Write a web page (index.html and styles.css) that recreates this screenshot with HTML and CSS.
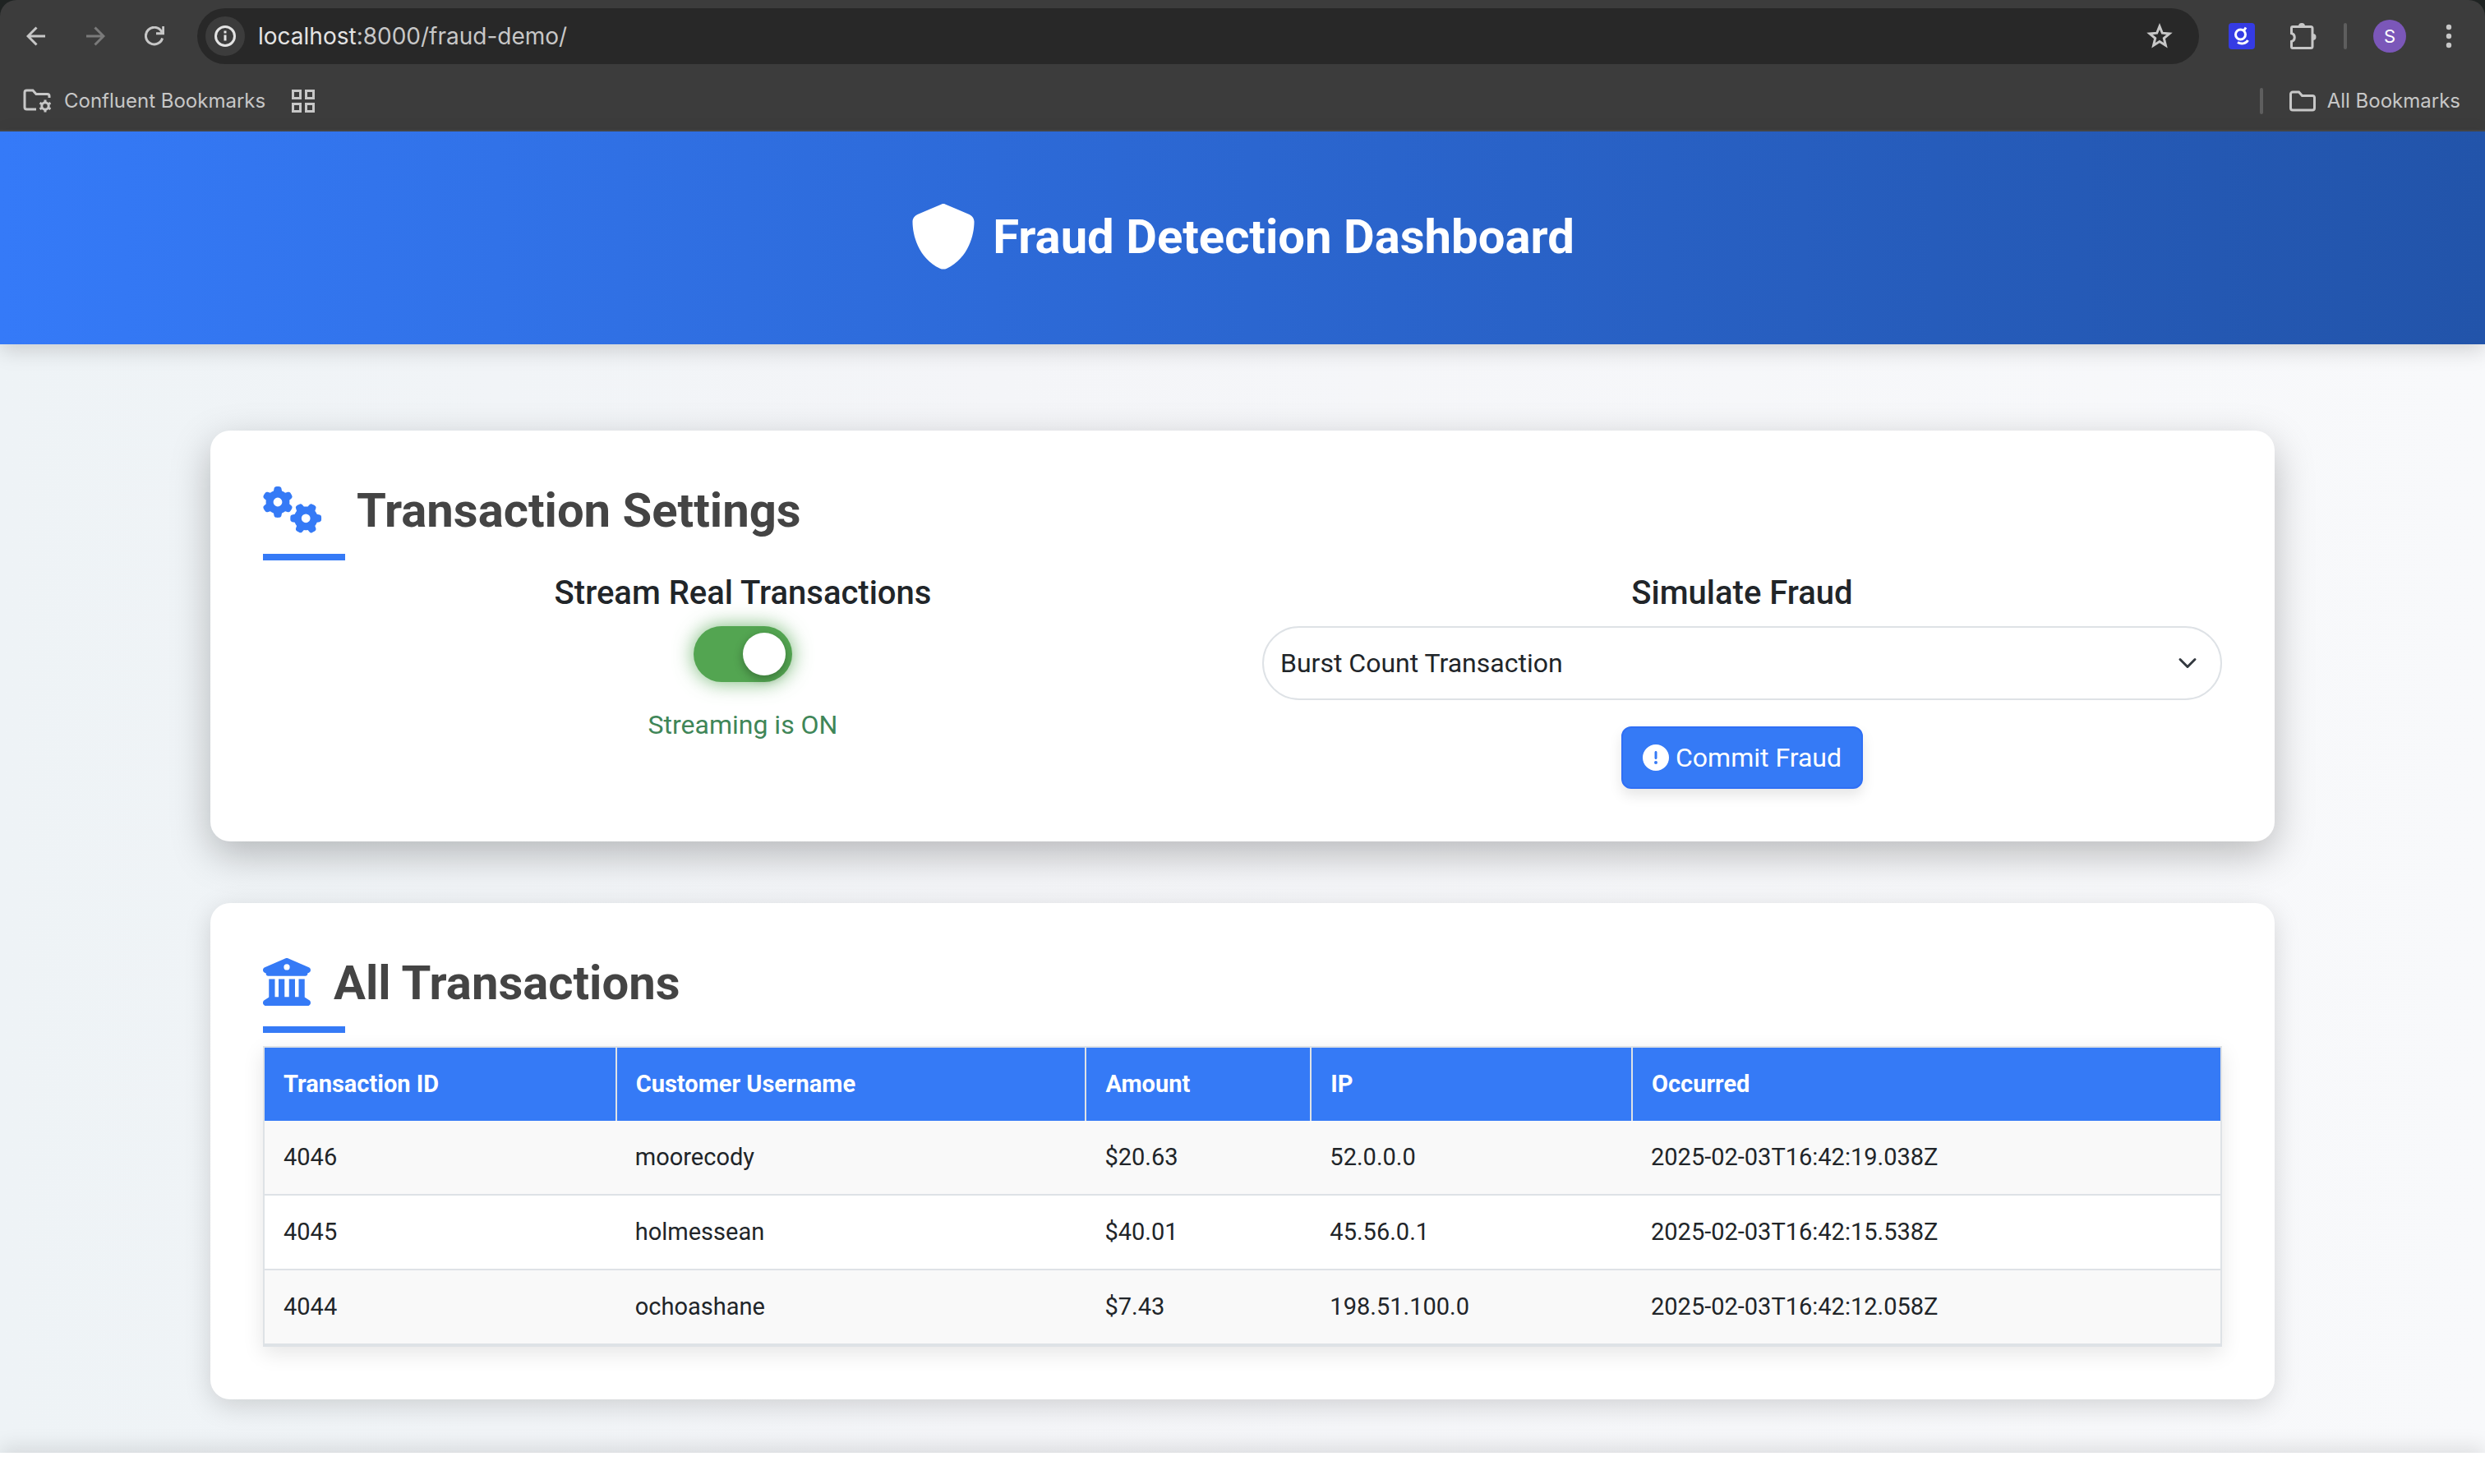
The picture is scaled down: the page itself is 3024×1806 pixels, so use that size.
FILE: index.html
```html
<!DOCTYPE html>
<html lang="en">
<head>
<meta charset="utf-8">
<meta name="viewport" content="width=device-width, initial-scale=1">
<title>Fraud Detection Dashboard</title>
<link rel="stylesheet" href="styles.css">
</head>
<body>
<div class="browser">
  <div class="toolbar">
    <button class="tool" aria-label="Back"><svg width="24" height="24" viewBox="0 0 24 24"><path d="M23 12H3M12.500 1.500 2 12l10.500 10.500" /></svg></button>
    <button class="tool tool-disabled" aria-label="Forward" disabled><svg width="24" height="24" viewBox="0 0 24 24"><path d="M1 12h20M11.500 1.500 22 12 11.500 22.500" /></svg></button>
    <button class="tool" aria-label="Reload"><svg width="24" height="24" viewBox="0 0 24 24"><path d="M21.600 14.500A10.300 10.300 0 1 1 20.500 6.200L22.500 8.500M22.700 0v8.700H14" /></svg></button>
    <div class="omnibox">
      <button class="site-info" aria-label="Site information"><svg width="26" height="26" viewBox="0 0 26 26"><circle cx="13" cy="13" r="11.500" /><path d="M13 11.500v7M13 6.500v3" /></svg></button>
      <div class="url"><span class="host">localhost</span>:8000/fraud-demo/</div>
      <button class="star" aria-label="Bookmark this tab"><svg width="32" height="32" viewBox="0 0 32 32"><path d="M16 4l3.300 8.200 8.700.7-6.700 5.700 2.100 8.600L16 22.600l-7.400 4.600 2.100-8.600L4 12.900l8.700-.7z" /></svg></button>
    </div>
    <div class="extensions">
      <button class="ext-g" aria-label="Extension"><svg width="32" height="32" viewBox="0 0 32 32"><circle cx="14.500" cy="14" r="6" /><path d="M18.500 9.500l2.500-4M11 23.500c4 2.500 10 2 12.500-2.500" /></svg></button>
      <button class="ext-all" aria-label="Extensions"><svg width="34" height="34" viewBox="0 0 34 34"><path d="M4 5.500h22a2 2 0 0 1 2 2v22a2 2 0 0 1-2 2H4a1.500 1.500 0 0 1-1.500-1.500v-6.500a5.200 5.200 0 0 0 0-10V7A1.500 1.500 0 0 1 4 5.500z" /><path class="solid" d="M11 5a4 4 0 0 1 8 0zM28.500 14a4 4 0 0 1 0 8z" /></svg></button>
      <span class="divider"></span>
      <button class="avatar" aria-label="Profile">S</button>
      <button class="menu" aria-label="Menu"><svg width="8" height="30" viewBox="0 0 8 30"><circle cx="4" cy="4" r="3.200" /><circle cx="4" cy="15" r="3.200" /><circle cx="4" cy="26" r="3.200" /></svg></button>
    </div>
  </div>
  <div class="bookmarks">
    <a class="bookmark" href="#"><svg width="36" height="30" viewBox="0 0 36 30"><path d="M16 25H4.500A2.500 2.500 0 0 1 2 22.500v-18A2.500 2.500 0 0 1 4.500 2H12l4 4.500h13.500A2.500 2.500 0 0 1 32 9v2" /><circle cx="27" cy="21" r="4.200" /><path d="M27 13.500v3M27 25.500v3M20.500 17.200l2.700 1.600M30.800 23.200l2.700 1.600M33.500 17.200l-2.700 1.600M23.200 23.200l-2.700 1.600" /></svg><span>Confluent Bookmarks</span></a>
    <a class="bookmark" href="#" aria-label="Apps"><svg width="28" height="28" viewBox="0 0 28 28"><path d="M1.500 1.500h9v9h-9zM17.500 1.500h9v9h-9zM1.500 17.500h9v9h-9zM17.500 17.500h9v9h-9z" /></svg></a>
    <span class="divider divider-end"></span>
    <a class="bookmark" href="#"><svg width="32" height="26" viewBox="0 0 32 26"><path d="M4 2h7.500l4 4.500H28A2.500 2.500 0 0 1 30.500 8.500v13A2.500 2.500 0 0 1 28 24H4a2.500 2.500 0 0 1-2.500-2.500v-17A2.500 2.500 0 0 1 4 2z" /></svg><span>All Bookmarks</span></a>
  </div>
</div>

<header class="hero">
  <svg width="80" height="80" viewBox="0 0 512 512" aria-hidden="true"><path d="M256 0c4.600 0 9.200 1 13.400 2.900L457.700 82.800c22 9.300 38.400 31 38.300 57.200c-.5 99.200-41.300 280.700-213.600 363.200c-16.700 8-36.100 8-52.800 0C57.300 420.700 16.500 239.200 16 140c-.1-26.200 16.300-47.900 38.300-57.200L242.700 2.900C246.800 1 251.400 0 256 0z" /></svg>
  <h1>Fraud Detection Dashboard</h1>
</header>

<main class="content">
  <section class="card card-raised">
    <h2 class="title"><span class="title-row"><svg width="72" height="58" viewBox="0 0 640 512" aria-hidden="true"><path fill-rule="evenodd" d="M308.500 135.300c7.100-6.300 9.900-16.200 6.200-25c-2.300-5.300-4.800-10.500-7.600-15.500L304 89.400c-3-5-6.300-9.900-9.800-14.600c-5.700-7.600-15.700-10.100-24.700-7.100l-28.200 9.300c-10.700-8.800-23-16-36.200-20.900L199 27.100c-1.900-9.300-9.100-16.700-18.500-17.800C173.900 8.400 167.200 8 160.400 8h-.7c-6.800 0-13.500.4-20.100 1.200c-9.400 1.100-16.600 8.600-18.500 17.800L115 56.100c-13.300 5-25.500 12.100-36.200 20.900L50.500 67.800c-9-3-19-.5-24.700 7.100c-3.500 4.700-6.800 9.600-9.900 14.600l-3 5.300c-2.800 5-5.300 10.200-7.600 15.600c-3.700 8.700-.9 18.600 6.200 25l22.200 19.800C32.600 161.900 32 168.900 32 176s.6 14.100 1.700 20.900L11.500 216.700c-7.100 6.300-9.900 16.200-6.200 25c2.300 5.300 4.800 10.500 7.600 15.600l3 5.200c3 5.100 6.300 9.900 9.900 14.600c5.700 7.600 15.700 10.100 24.700 7.100l28.200-9.300c10.700 8.800 23 16 36.200 20.900l6.100 29.100c1.900 9.300 9.100 16.700 18.500 17.800c6.700.8 13.500 1.200 20.400 1.200s13.700-.4 20.400-1.200c9.400-1.100 16.600-8.600 18.500-17.800l6.100-29.100c13.300-5 25.500-12.100 36.200-20.900l28.200 9.300c9 3 19 .5 24.700-7.100c3.500-4.700 6.800-9.500 9.800-14.600l3.100-5.400c2.800-5 5.300-10.200 7.600-15.500c3.700-8.700.9-18.600-6.200-25l-22.200-19.800c1.100-6.800 1.700-13.800 1.700-20.900s-.6-14.100-1.700-20.900l22.200-19.800zM112 176a48 48 0 1 1 96 0a48 48 0 1 1-96 0zM504.700 500.500c6.300 7.100 16.200 9.900 25 6.200c5.300-2.300 10.500-4.800 15.500-7.600l5.400-3.100c5-3 9.900-6.300 14.600-9.800c7.600-5.700 10.100-15.700 7.100-24.700l-9.300-28.200c8.800-10.700 16-23 20.900-36.200l29.100-6.100c9.300-1.900 16.700-9.100 17.800-18.500c.8-6.700 1.200-13.500 1.200-20.400s-.4-13.700-1.200-20.400c-1.100-9.400-8.600-16.600-17.800-18.500L583.900 307c-5-13.300-12.100-25.500-20.900-36.200l9.300-28.200c3-9 .5-19-7.100-24.700c-4.700-3.500-9.600-6.800-14.600-9.900l-5.300-3c-5-2.800-10.200-5.300-15.600-7.600c-8.700-3.700-18.600-.9-25 6.200l-19.800 22.200c-6.800-1.100-13.800-1.700-20.900-1.700s-14.100.6-20.900 1.700l-19.800-22.200c-6.300-7.100-16.200-9.900-25-6.200c-5.300 2.300-10.500 4.800-15.600 7.600l-5.200 3c-5.100 3-9.900 6.300-14.600 9.900c-7.600 5.700-10.100 15.700-7.100 24.700l9.300 28.200c-8.800 10.700-16 23-20.900 36.200L315.100 313c-9.300 1.900-16.700 9.100-17.800 18.500c-.8 6.700-1.200 13.500-1.200 20.400s.4 13.700 1.200 20.400c1.100 9.400 8.600 16.600 17.800 18.500l29.100 6.100c5 13.300 12.100 25.500 20.900 36.200l-9.300 28.200c-3 9-.5 19 7.100 24.700c4.700 3.500 9.500 6.800 14.600 9.800l5.400 3.100c5 2.800 10.200 5.300 15.500 7.600c8.700 3.700 18.600.9 25-6.200l19.800-22.200c6.800 1.100 13.800 1.700 20.900 1.700s14.100-.6 20.900-1.700l19.800 22.200zM464 304a48 48 0 1 1 0 96a48 48 0 1 1 0-96z" /></svg><span class="title-text title-text-wide">Transaction Settings</span></span></h2>
    <div class="settings">
      <div class="setting">
        <h3><label for="stream">Stream Real Transactions</label></h3>
        <input class="switch" id="stream" type="checkbox" role="switch" checked>
        <p class="status">Streaming is ON</p>
      </div>
      <div class="setting">
        <h3><label for="fraud">Simulate Fraud</label></h3>
        <div class="select-wrap">
          <select class="select" id="fraud"><option>Burst Count Transaction</option></select>
          <svg class="chevron" width="24" height="24" viewBox="0 0 16 16" aria-hidden="true"><path d="m2 5 6 6 6-6" /></svg>
        </div>
        <button class="commit"><svg width="32" height="32" viewBox="0 0 512 512" aria-hidden="true"><path fill-rule="evenodd" d="M256 512A256 256 0 1 0 256 0a256 256 0 1 0 0 512zm0-384c13.300 0 24 10.700 24 24V264c0 13.300-10.700 24-24 24s-24-10.700-24-24V152c0-13.300 10.700-24 24-24zM224 352a32 32 0 1 1 64 0a32 32 0 1 1-64 0z" /></svg>Commit Fraud</button>
      </div>
    </div>
  </section>

  <section class="card">
    <h2 class="title"><span class="title-row"><svg width="58" height="58" viewBox="0 0 512 512" aria-hidden="true"><path fill-rule="evenodd" d="M243.400 2.600l-224 96c-14 6-21.800 21-18.700 35.800S16.800 160 32 160v8c0 13.300 10.700 24 24 24H456c13.300 0 24-10.700 24-24v-8c15.200 0 28.300-10.700 31.300-25.600s-4.800-29.900-18.700-35.800l-224-96c-8-3.400-17.200-3.400-25.200 0zM128 224H64V420.300c-.6 .3-1.200 .7-1.800 1.100l-48 32c-11.700 7.800-17 22.400-12.900 35.900S17.900 512 32 512H480c14.100 0 26.500-9.200 30.600-22.700s-1.100-28.100-12.900-35.900l-48-32c-.6-.4-1.200-.7-1.800-1.100V224H384V416H344V224H280V416H232V224H168V416H128V224zM256 64a32 32 0 1 1 0 64a32 32 0 1 1 0-64z" /></svg><span class="title-text">All Transactions</span></span></h2>
    <table class="transactions">
      <colgroup><col class="col-id"><col class="col-user"><col class="col-amount"><col class="col-ip"><col></colgroup>
      <thead><tr><th scope="col">Transaction ID</th><th scope="col">Customer Username</th><th scope="col">Amount</th><th scope="col">IP</th><th scope="col">Occurred</th></tr></thead>
      <tbody>
        <tr><td>4046</td><td>moorecody</td><td>$20.63</td><td>52.0.0.0</td><td>2025-02-03T16:42:19.038Z</td></tr>
        <tr><td>4045</td><td>holmessean</td><td>$40.01</td><td>45.56.0.1</td><td>2025-02-03T16:42:15.538Z</td></tr>
        <tr><td>4044</td><td>ochoashane</td><td>$7.43</td><td>198.51.100.0</td><td>2025-02-03T16:42:12.058Z</td></tr>
      </tbody>
    </table>
  </section>
</main>
<footer class="footer"></footer>
</body>
</html>
```
FILE: styles.css
```css
* { box-sizing: border-box; }

body {
  margin: 0;
  min-height: 100vh;
  display: flex;
  flex-direction: column;
  background: #1f2322;
  color: #212529;
  font: 32px/48px Roboto, sans-serif;
}

h1, h2, h3, p { margin: 0; }

button {
  border: 0;
  padding: 0;
  background: none;
  color: inherit;
  font: inherit;
  display: flex;
  align-items: center;
  justify-content: center;
}

svg { display: block; flex: none; }

/* Browser chrome */
.browser {
  background: #3c3c3c;
  border-bottom: 2px solid #474747;
  border-radius: 20px 20px 0 0;
  color: #c7c7c7;
  font: 24px/32px Inter, sans-serif;
}

.browser svg {
  fill: none;
  stroke: #c7c7c7;
  stroke-width: 3;
}

.toolbar {
  display: flex;
  align-items: center;
  height: 88px;
  padding: 0 40px 0 32px;
  gap: 48px;
}

.tool-disabled { opacity: .45; }

.omnibox {
  flex: 1;
  display: flex;
  align-items: center;
  height: 68px;
  margin-left: -8px;
  padding: 0 32px 0 10px;
  border-radius: 34px;
  background: #282828;
}

.site-info {
  width: 48px;
  height: 48px;
  border-radius: 50%;
  background: #3c3c3c;
}

.browser .site-info svg { stroke: #e3e3e3; }

.url {
  flex: 1;
  margin-left: 16px;
  font-size: 28px;
}

.host { color: #e3e3e3; }

.extensions {
  display: flex;
  align-items: center;
  gap: 32px;
  margin-left: -12px;
}

.ext-g {
  border-radius: 4px;
  background: #353be4;
}

.ext-all {
  width: 44px;
  justify-content: flex-end;
}

.browser .ext-g svg { stroke: #fff; }

.browser .solid { fill: #c7c7c7; stroke: none; }

.divider {
  width: 4px;
  height: 32px;
  border-radius: 2px;
  background: #5e5e5e;
}

.avatar {
  width: 40px;
  height: 40px;
  border-radius: 50%;
  background: #7b57b9;
  color: #fff;
  font-size: 22px;
}

.menu { margin-left: 16px; }

.browser .menu svg { fill: #c7c7c7; stroke: none; }

.bookmarks {
  display: flex;
  align-items: center;
  height: 70px;
  padding: 0 30px 0 28px;
  gap: 32px;
}

.bookmark {
  display: flex;
  align-items: center;
  gap: 14px;
  color: inherit;
  text-decoration: none;
}

.divider-end { margin-left: auto; }

/* Page header */
.hero {
  display: flex;
  justify-content: center;
  align-items: center;
  gap: 20px;
  padding: 88px 32px 91px;
  background: linear-gradient(90deg, #357af8, #2c68d4 45%, #2254aa);
  color: #fff;
  box-shadow: 0 8px 24px rgba(0, 0, 0, .15);
  z-index: 1;
}

.hero svg { fill: #fff; }

.hero h1 {
  font-size: 58px;
  line-height: 80px;
  font-weight: 700;
}

/* Cards */
.content {
  flex: 1;
  display: flex;
  flex-direction: column;
  align-items: center;
  gap: 75px;
  padding: 105px 32px 63px;
  background: linear-gradient(90deg, #eef3f6, #f4f5f8 40%, #f8f9fb);
}

.card {
  width: 100%;
  max-width: 2512px;
  padding: 64px;
  border-radius: 24px;
  background: #fff;
  box-shadow: 0 8px 32px rgba(0, 0, 0, .15);
}

.card-raised { box-shadow: 0 16px 48px rgba(0, 0, 0, .25); }

.title {
  display: grid;
  gap: 19px;
  margin-bottom: 16px;
  color: #444;
  font-size: 58px;
  line-height: 67px;
  font-weight: 700;
}

.title::after {
  content: "";
  width: 100px;
  height: 8px;
  background: #357af6;
}

.title-row {
  display: flex;
  gap: 28px;
}

.title-text-wide { padding-left: 14px; }

.title svg {
  margin-top: 3px;
  fill: #357af6;
}

.settings {
  display: grid;
  grid-template-columns: 1fr 1fr;
  gap: 48px;
}

.setting {
  display: flex;
  flex-direction: column;
  align-items: center;
}

.setting h3 {
  margin-bottom: 16px;
  font-size: 40px;
  line-height: 48px;
  font-weight: 500;
}

.switch {
  appearance: none;
  display: flex;
  justify-content: flex-end;
  width: 120px;
  height: 68px;
  margin: 0 0 28px;
  padding: 8px;
  border-radius: 34px;
  background: #53a551;
  box-shadow: 0 0 24px rgba(83, 165, 81, .8);
}

.switch::before {
  content: "";
  width: 52px;
  height: 52px;
  border-radius: 50%;
  background: #fff;
  box-shadow: 0 4px 12px rgba(0, 0, 0, .3);
}

.status { color: #3f8658; }

.select-wrap {
  display: grid;
  align-items: center;
  width: 100%;
  margin-bottom: 32px;
}

.select-wrap > * { grid-area: 1 / 1; }

.select {
  appearance: none;
  width: 100%;
  height: 90px;
  padding: 0 72px 0 20px;
  border: 2px solid #dee2e6;
  border-radius: 45px;
  background: #fff;
  color: #212529;
  font: inherit;
}

.chevron {
  justify-self: end;
  margin-right: 30px;
  fill: none;
  stroke: #343a40;
  stroke-width: 2;
  stroke-linecap: round;
  stroke-linejoin: round;
  pointer-events: none;
}

.commit {
  height: 76px;
  padding: 0 24px;
  gap: 8px;
  border: 2px solid #2f6ff5;
  border-radius: 12px;
  background: #357af6;
  color: #fff;
  box-shadow: 0 8px 16px rgba(0, 0, 0, .1);
}

.commit svg { fill: #fff; }

/* Transactions */
.transactions {
  width: 100%;
  table-layout: fixed;
  border: 2px solid #dee2e6;
  border-bottom-width: 4px;
  border-collapse: collapse;
  box-shadow: 0 8px 24px rgba(0, 0, 0, .1);
  font-size: 29px;
  line-height: 41px;
  text-align: left;
}

.col-id { width: 18%; }
.col-user { width: 24%; }
.col-amount { width: 11.5%; }
.col-ip { width: 16.4%; }

.transactions th,
.transactions td { padding: 24px 23px; }

.transactions th {
  border-left: 2px solid #dee2e6;
  background: #357af6;
  color: #fff;
  font-weight: 700;
}

.transactions tbody tr + tr { border-top: 2px solid #dee2e6; }
.transactions tbody tr:nth-child(odd) { background: #f9f9f9; }

.footer {
  height: 38px;
  background: #fff;
  box-shadow: 0 -8px 24px rgba(0, 0, 0, .1);
}
```
